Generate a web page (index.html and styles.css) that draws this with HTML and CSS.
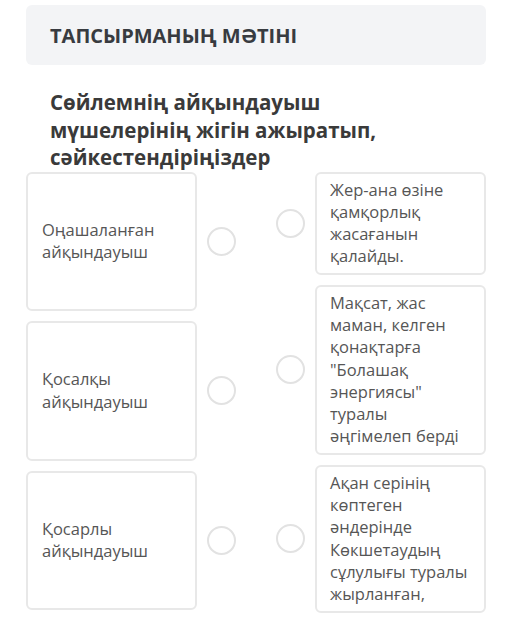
FILE: index.html
```html
<!DOCTYPE html>
<html lang="kk">
<head>
<meta charset="utf-8">
<link rel="stylesheet" href="styles.css">
</head>
<body>
<div class="page">
  <div class="header">ТАПСЫРМАНЫҢ МӘТІНІ</div>
  <h1 class="title">Сөйлемнің айқындауыш мүшелерінің жігін ажыратып, сәйкестендіріңіздер</h1>
  <div class="match">
    <div class="col">
      <div class="left-item"><div class="card left-card">Оңашаланған айқындауыш</div><span class="dot"></span></div>
      <div class="left-item"><div class="card left-card">Қосалқы айқындауыш</div><span class="dot"></span></div>
      <div class="left-item"><div class="card left-card">Қосарлы айқындауыш</div><span class="dot"></span></div>
    </div>
    <div class="col">
      <div class="right-item"><span class="dot"></span><div class="card right-card">Жер-ана өзіне қамқорлық жасағанын қалайды.</div></div>
      <div class="right-item"><span class="dot"></span><div class="card right-card">Мақсат, жас маман, келген қонақтарға "Болашақ энергиясы" туралы әңгімелеп берді</div></div>
      <div class="right-item"><span class="dot"></span><div class="card right-card">Ақан серінің көптеген әндерінде Көкшетаудың сұлулығы туралы жырланған,</div></div>
    </div>
  </div>
</div>
</body>
</html>
```

FILE: styles.css
```css
* { box-sizing: border-box; }
html, body { margin: 0; padding: 0; background: #ffffff; }
body { font-family: "Open Sans", "Noto Sans", sans-serif; color: #555555; }
.page { padding: 5px 26px 0 26px; width: 512px; }
.header {
  height: 60px;
  background: #f3f4f6;
  border-radius: 6px;
  padding-left: 24px;
  display: flex;
  align-items: center;
  font-size: 20px;
  font-weight: 700;
  color: #383b40;
}
.title {
  margin: 24px 0 0 0;
  padding-left: 24px;
  font-size: 20.5px;
  font-weight: 700;
  line-height: 27.5px;
  color: #3a3a3a;
  width: 380px;
}
.match {
  display: grid;
  grid-template-columns: 210px 210px;
  column-gap: 40px;
}
.col { display: flex; flex-direction: column; gap: 10px; }
.left-item, .right-item { display: flex; align-items: center; gap: 10px; }
.card {
  border: 2px solid #e8e8e8;
  border-radius: 6px;
  background: #fff;
  font-size: 16.5px;
  line-height: 22.3px;
  color: #565656;
}
.left-card {
  width: 171px;
  height: 139.5px;
  padding: 0 10px 0 14px;
  display: flex;
  align-items: center;
}
.right-card {
  width: 171px;
  padding: 5px 16px 5px 13px;
}
.dot {
  flex: none;
  width: 29px;
  height: 29px;
  border: 2px solid #e2e2e2;
  border-radius: 50%;
}
```
